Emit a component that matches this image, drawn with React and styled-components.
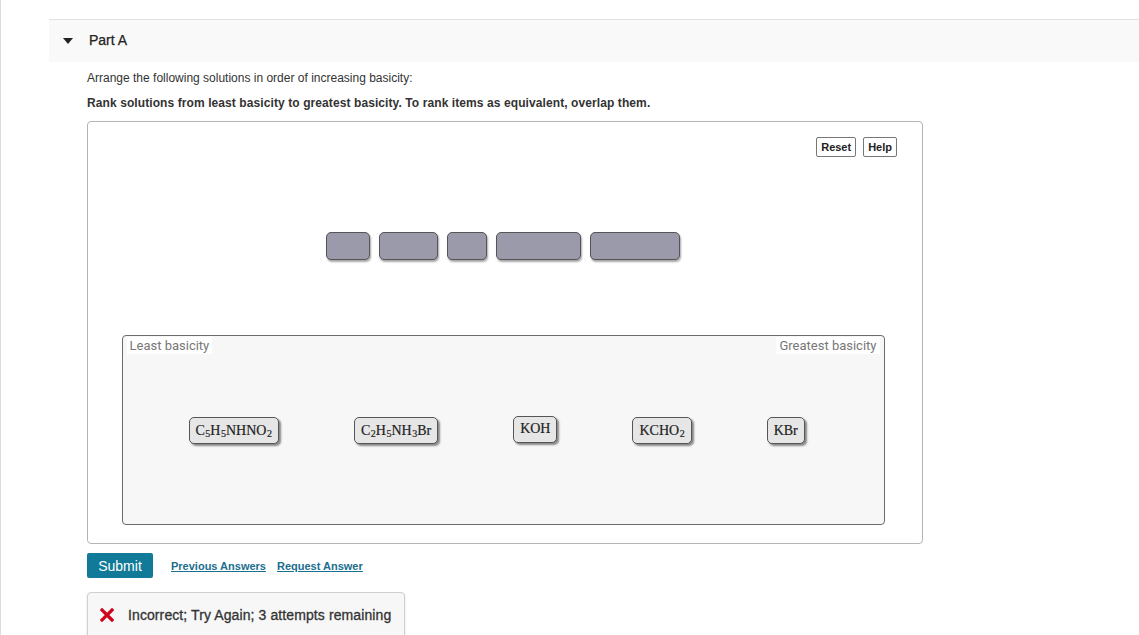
import styled, { createGlobalStyle } from "styled-components";

const Global = createGlobalStyle`
  html, body { margin: 0; padding: 0; background: #fff; }
  body { font-family: "Liberation Sans", Arial, sans-serif; color: #333; }
`;

const Page = styled.div`
  min-height: 635px;
  border-left: 1px solid #dcdcdc;
  padding-top: 19px;
  overflow: hidden;
`;

const Section = styled.div`
  margin-left: 48px;
`;

const PartHeader = styled.div`
  height: 42px;
  border-top: 1px solid #e2e2e2;
  background: #f9f9f9;
  display: flex;
  align-items: center;
  padding-left: 14px;
`;

const Caret = styled.span`
  width: 0;
  height: 0;
  border-left: 5px solid transparent;
  border-right: 5px solid transparent;
  border-top: 6px solid #222;
  margin-right: 16px;
`;

const PartTitle = styled.span`
  font-size: 14px;
  color: #222;
  -webkit-text-stroke: 0.25px #222;
  margin-top: -2px;
`;

const Body = styled.div`
  padding: 8px 0 0 38px;
`;

const Prompt = styled.p`
  margin: 0;
  font-size: 12px;
  line-height: 16px;
  color: #333;
  font-weight: ${p => (p.$strong ? "bold" : "normal")};
  margin-top: ${p => p.$top || 0}px;
  letter-spacing: ${p => (p.$strong ? "0.09px" : "0")};
`;

const Workspace = styled.div`
  margin-top: 10px;
  width: 836px;
  height: 423px;
  box-sizing: border-box;
  border: 1px solid #b4b4b4;
  border-radius: 4px;
  display: flex;
  flex-direction: column;
  align-items: center;
  padding: 15px 0 0;
`;

const Toolbar = styled.div`
  align-self: stretch;
  display: flex;
  justify-content: flex-end;
  gap: 7px;
  padding-right: 25px;
`;

const ToolButton = styled.button`
  font-family: "Liberation Sans", Arial, sans-serif;
  font-size: 11px;
  font-weight: bold;
  color: #222;
  background: #fff;
  border: 1px solid #777;
  border-radius: 2px;
  height: 20px;
  padding: 0 4px;
`;

const Slots = styled.div`
  display: flex;
  gap: 9px;
  margin-top: 75px;
  margin-right: 5px;
`;

const Slot = styled.div`
  width: ${p => p.$w}px;
  height: 28px;
  box-sizing: border-box;
  background: #9b9aab;
  border: 1px solid #555;
  border-radius: 5px;
  box-shadow: 1px 2px 2px rgba(0, 0, 0, 0.35);
`;

const Ranking = styled.div`
  position: relative;
  margin-top: 75px;
  margin-left: -4px;
  width: 763px;
  height: 190px;
  box-sizing: border-box;
  background: #f7f7f7;
  border: 1px solid #6b6b6b;
  border-radius: 4px;
  display: flex;
  align-items: center;
  gap: 75px;
  padding-left: 66px;
`;

const EndLabel = styled.span`
  position: absolute;
  top: 1px;
  ${p => (p.$right ? "right: 4px;" : "left: 4px;")}
  background: #fff;
  color: #777;
  font-family: Roboto, "Liberation Sans", Arial, sans-serif;
  font-size: 13px;
  line-height: 17px;
  padding: 0 3px;
`;

const Chip = styled.div`
  height: 27px;
  box-sizing: border-box;
  display: flex;
  align-items: center;
  padding: 0 6px;
  margin-top: ${p => (p.$up ? "-2px" : "1px")};
  background: #e6e6e6;
  border: 1px solid #555;
  border-radius: 5px;
  box-shadow: 2px 2px 2px rgba(0, 0, 0, 0.45);
  font-family: "Liberation Serif", "Times New Roman", serif;
  font-size: 14px;
  color: #222;
  -webkit-text-stroke: 0.2px #222;
  white-space: nowrap;
`;

const Sub = styled.span`
  font-size: 10px;
  position: relative;
  top: 3px;
  padding-left: 0.5px;
`;

const Actions = styled.div`
  display: flex;
  align-items: center;
  margin-top: 9px;
`;

const Submit = styled.button`
  width: 66px;
  height: 25px;
  border: none;
  border-radius: 2px;
  background: #107a98;
  color: #fff;
  font-family: "Liberation Sans", Arial, sans-serif;
  font-size: 14px;
  margin-right: 18px;
`;

const ActionLink = styled.a`
  font-size: 11px;
  font-weight: bold;
  color: #1a6e8e;
  text-decoration: underline;
  margin-right: 11px;
  cursor: pointer;
`;

const Feedback = styled.div`
  margin-top: 14px;
  width: 318px;
  height: 48px;
  box-sizing: border-box;
  border: 1px solid #cfcfcf;
  border-radius: 4px;
  background: #f7f7f7;
  box-shadow: 0 1px 2px rgba(0, 0, 0, 0.15);
  display: flex;
  align-items: center;
  padding: 0 0 3px 12px;
  font-size: 14px;
  letter-spacing: 0.1px;
  color: #333;
  -webkit-text-stroke: 0.3px #333;
`;

const Cross = styled.svg`
  width: 14px;
  height: 14px;
  margin-right: 14px;
`;

const slotWidths = [44, 59, 40, 85, 90];

export default function App() {
  return (
    <>
      <Global />
      <Page>
        <Section>
          <PartHeader>
            <Caret />
            <PartTitle>Part A</PartTitle>
          </PartHeader>
          <Body>
            <Prompt>Arrange the following solutions in order of increasing basicity:</Prompt>
            <Prompt $strong $top={9}>
              Rank solutions from least basicity to greatest basicity. To rank items as equivalent, overlap them.
            </Prompt>

            <Workspace>
              <Toolbar>
                <ToolButton>Reset</ToolButton>
                <ToolButton>Help</ToolButton>
              </Toolbar>
              <Slots>
                {slotWidths.map((w, i) => (
                  <Slot key={i} $w={w} />
                ))}
              </Slots>
              <Ranking>
                <EndLabel>Least basicity</EndLabel>
                <EndLabel $right>Greatest basicity</EndLabel>
                <Chip>C<Sub>5</Sub>H<Sub>5</Sub>NHNO<Sub>2</Sub></Chip>
                <Chip>C<Sub>2</Sub>H<Sub>5</Sub>NH<Sub>3</Sub>Br</Chip>
                <Chip $up>KOH</Chip>
                <Chip>KCHO<Sub>2</Sub></Chip>
                <Chip>KBr</Chip>
              </Ranking>
            </Workspace>

            <Actions>
              <Submit>Submit</Submit>
              <ActionLink>Previous Answers</ActionLink>
              <ActionLink>Request Answer</ActionLink>
            </Actions>

            <Feedback>
              <Cross viewBox="0 0 14 14">
                <path d="M2 2 L12 12 M12 2 L2 12" stroke="#d0021b" strokeWidth="3.2" strokeLinecap="square" />
              </Cross>
              Incorrect; Try Again; 3 attempts remaining
            </Feedback>
          </Body>
        </Section>
      </Page>
    </>
  );
}
